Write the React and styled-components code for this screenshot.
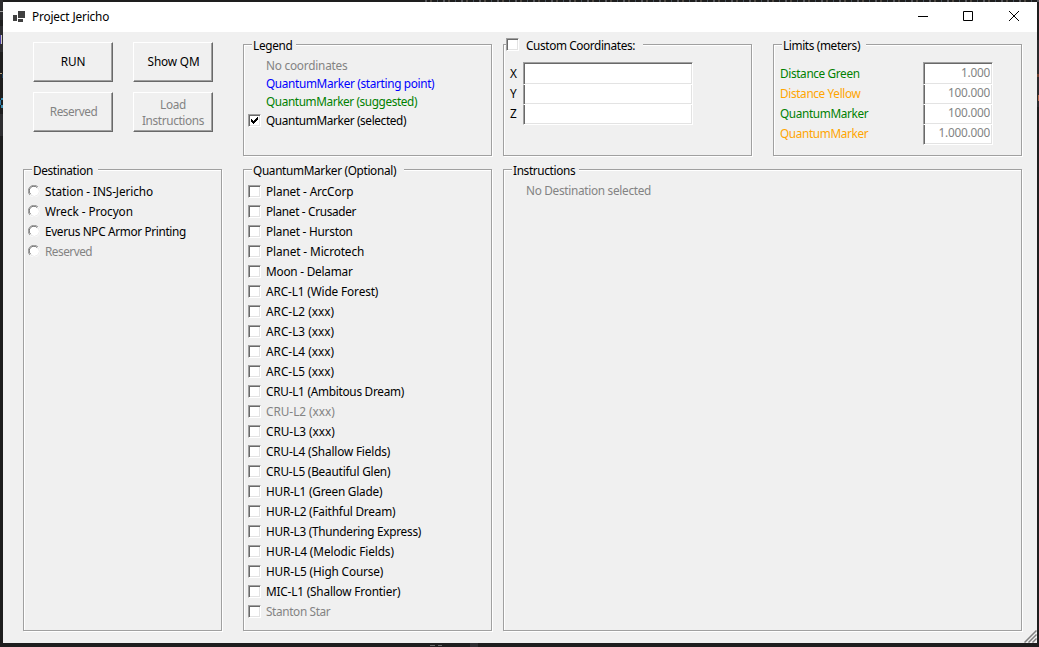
import React from 'react';
import styled, { createGlobalStyle, css } from 'styled-components';

const Global = createGlobalStyle`
  * { box-sizing: border-box; }
  html, body { margin: 0; padding: 0; }
  body {
    background: #1e1e1e;
    overflow: hidden;
    font-family: 'Noto Sans', 'Open Sans', sans-serif;
    font-size: 11.8px;
    letter-spacing: -0.22px;
    color: #000;
  }
`;

const Desktop = styled.div`
  position: relative;
  width: 1039px;
  height: 647px;
  padding: 2px 2px 4px 3px;
  background: #1e1e1e;
  overflow: hidden;
`;
const Window = styled.main`
  position: relative;
  width: 1034px;
  height: 641px;
  background: #f0f0f0;
`;
const TitleBar = styled.header`
  height: 30px;
  background: #fff;
  display: flex;
  align-items: center;
  padding-left: 10px;
`;
const Title = styled.h1`
  margin: 0 auto 0 6px;
  padding-bottom: 2px;
  font-size: 11.8px;
  font-weight: 400;
  line-height: 16px;
  letter-spacing: -0.15px;
`;
const Caption = styled.span`
  width: 46px;
  height: 28px;
  align-self: flex-start;
  display: grid;
  place-items: center;
  svg { overflow: visible; }
`;
const Client = styled.div`
  display: flex;
  flex-direction: column;
  gap: 13px;
  padding: 12px 15px 0 20px;
`;
const Row = styled.div`
  display: flex;
  height: ${p => p.$h}px;
`;
const Buttons = styled.div`
  display: grid;
  grid-template-columns: 80px 80px;
  grid-auto-rows: 40px;
  gap: 10px 20px;
  width: 199px;
  margin: -2px 21px 0 0;
  padding-left: 10px;
`;
const Button = styled.button`
  font: inherit;
  letter-spacing: ${p => p.$ls ?? -0.22}px;
  line-height: 16px;
  padding: 0 0 ${p => p.$pb ?? 1}px ${p => p.$pl ?? 0}px;
  background: #f0f0f0;
  color: ${p => (p.disabled ? '#838383' : '#000')};
  border: 1px solid;
  border-color: #fff #696969 #696969 #fff;
  box-shadow: inset -1px -1px 0 #a0a0a0;
`;
const Group = styled.section`
  width: ${p => p.$w}px;
  height: 100%;
  margin-right: ${p => p.$gap || 0}px;
  border: 1px solid #a0a0a0;
  box-shadow: 1px 1px 0 #fff, inset 1px 1px 0 #fff;
  flex: none;
`;
const Legend = styled.h2`
  width: ${p => p.$w}px;
  height: 16px;
  margin: -8px 0 0 ${p => p.$x ?? 8}px;
  padding-left: ${p => p.$pad ?? 1}px;
  background: #f0f0f0;
  font-size: 11.8px;
  font-weight: 400;
  line-height: 16px;
  letter-spacing: ${p => p.$ls ?? -0.22}px;
  white-space: nowrap;
  display: flex;
  gap: 7px;
`;
const List = styled.div`
  padding: ${p => p.$top}px 0 0 4px;
`;
const Item = styled.label`
  display: flex;
  align-items: center;
  gap: 5px;
  height: ${p => p.$h || 20}px;
  padding-bottom: 2px;
  line-height: 20px;
  letter-spacing: ${p => p.$ls ?? -0.22}px;
  white-space: nowrap;
  color: ${p => p.$c || '#000'};
`;
const sunken = css`
  border: 1px solid;
  border-color: #a0a0a0 #fff #fff #a0a0a0;
  box-shadow: inset 1px 1px 0 #696969, inset -1px -1px 0 #e3e3e3;
  background: #fff;
`;
const Box = styled.span`
  ${sunken}
  width: 13px;
  height: 13px;
  flex: none;
  margin-top: 1px;
  visibility: ${p => (p.$hidden ? 'hidden' : 'visible')};
  svg { display: block; margin: 1px; }
`;
const Field = styled.div`
  display: flex;
  height: 20px;
  color: ${p => p.$c || '#000'};
`;
const FieldLabel = styled.span`
  width: ${p => p.$w}px;
  padding-left: 2px;
  line-height: 22px;
  letter-spacing: -0.36px;
`;
const Input = styled.input`
  ${sunken}
  position: relative;
  z-index: ${p => p.$z};
  width: ${p => p.$w}px;
  height: 23px;
  padding: 0 2px 3px;
  outline: 0;
  border-radius: 0;
  font: inherit;
  letter-spacing: -0.22px;
  text-align: right;
  color: #838383;
`;
const Message = styled.p`
  margin: 2px 0 0 22px;
  line-height: 20px;
  letter-spacing: -0.3px;
  color: #838383;
`;
const Grip = styled.svg`
  position: absolute;
  right: 0;
  bottom: 0;
`;
/* Bits of the editor behind the window that show past its edges */
const Behind = styled.span`
  position: absolute;
  left: ${p => p.$x}px;
  top: ${p => p.$y}px;
  width: ${p => p.$w}px;
  height: ${p => p.$h}px;
  background: ${p => p.$c};
`;
const behind = [
  [0, 0, 3, 20, '#2d2d30'], [0, 11, 3, 1, '#a0a0a0'], [0, 26, 3, 26, '#2d2d30'],
  [0, 35, 1, 9, '#4a3fa0'], [1, 35, 1, 9, '#d0c8c0'], [0, 73, 2, 1, '#b09a78'], [2, 74, 1, 4, '#1d3f5c'],
  [1, 98, 2, 2, '#3a8ab0'], [0, 100, 1, 5, '#2f7ca8'], [1, 105, 2, 3, '#3a8ab0'], [0, 114, 3, 22, '#2d2d30'],
  [1037, 40, 2, 67, '#2a2a2c'], [1037, 74, 2, 3, '#6b3d2c'], [1038, 95, 1, 6, '#b06a4c'],
  [430, 645, 5, 1, '#6a6a6a'], [438, 645, 4, 1, '#6a6a6a'], [470, 643, 8, 4, '#2f2f33'],
];

function Check({ checked, hidden }) {
  return (
    <Box $hidden={hidden}>
      {checked && (
        <svg width="9" height="9" viewBox="0 0 9 9" shapeRendering="crispEdges">
          <path d="M1 3h1v1h1v1h1V4h1V3h1V2h1V1h1v3H7v1H6v1H5v1H4v1H3V7H2V6H1z" fill="#000" />
        </svg>
      )}
    </Box>
  );
}
function Radio() {
  return (
    <svg width="12" height="12" viewBox="0 0 12 12">
      <circle cx="6" cy="6" r="5" fill="#fff" />
      <path d="M1.9 10.1A5.6 5.6 0 0 1 10.1 1.9" fill="none" stroke="#a0a0a0" />
      <path d="M2.6 9.2A4.6 4.6 0 0 1 9.2 2.6" fill="none" stroke="#696969" />
      <path d="M10 3A4.8 4.8 0 0 1 3 10" fill="none" stroke="#e3e3e3" />
      <path d="M10.3 2A5.7 5.7 0 0 1 2 10.3" fill="none" stroke="#fff" strokeWidth=".8" />
    </svg>
  );
}

const gray = '#838383';
/* [label, tracking in px] */
const destinations = [
  ['Station - INS-Jericho', -0.1], ['Wreck - Procyon', -0.08], ['Everus NPC Armor Printing', -0.34], ['Reserved', -0.5],
];
const markers = [
  ['Planet - ArcCorp', -0.14], ['Planet - Crusader', -0.32], ['Planet - Hurston', -0.22], ['Planet - Microtech', -0.1],
  ['Moon - Delamar', -0.22], ['ARC-L1 (Wide Forest)', -0.12], ['ARC-L2 (xxx)', 0], ['ARC-L3 (xxx)', 0],
  ['ARC-L4 (xxx)', 0], ['ARC-L5 (xxx)', 0], ['CRU-L1 (Ambitous Dream)', -0.26], ['CRU-L2 (xxx)', -0.02],
  ['CRU-L3 (xxx)', -0.02], ['CRU-L4 (Shallow Fields)', -0.16], ['CRU-L5 (Beautiful Glen)', -0.2],
  ['HUR-L1 (Green Glade)', -0.22], ['HUR-L2 (Faithful Dream)', -0.2], ['HUR-L3 (Thundering Express)', -0.26],
  ['HUR-L4 (Melodic Fields)', -0.09], ['HUR-L5 (High Course)', -0.14], ['MIC-L1 (Shallow Frontier)', -0.18],
  ['Stanton Star', -0.36],
];
const limits = [
  ['Distance Green', '1.000', '#008000'],
  ['Distance Yellow', '100.000', '#ffa500'],
  ['QuantumMarker', '100.000', '#008000'],
  ['QuantumMarker', '1.000.000', '#ffa500'],
];

export default function App() {
  return (
    <Desktop>
      <Global />
      {behind.map(([x, y, w, h, c], i) => <Behind key={i} $x={x} $y={y} $w={w} $h={h} $c={c} />)}
      <Behind
        $x={420} $y={0} $w={619} $h={2}
        $c="repeating-linear-gradient(90deg, #1e1e1e 0 5px, #55555a 5px 7px, #1e1e1e 7px 10px, #4c4640 10px 12px, #1e1e1e 12px 17px, #46505a 17px 18px)"
      />
      <Window>
        <TitleBar>
          <svg width="13" height="12" viewBox="0 0 13 12" fill="#404040" shapeRendering="crispEdges">
            <path d="M0 4h4v6H0zM5 0h7v7H5zM5 8h5v3H5z" />
          </svg>
          <Title>Project Jericho</Title>
          <Caption><svg width="10" height="10"><path d="M1 5.5h10" stroke="#000" /></svg></Caption>
          <Caption><svg width="10" height="10"><path d="M.5.5h9v9h-9z" fill="none" stroke="#000" /></svg></Caption>
          <Caption><svg width="10" height="10"><path d="M0 0l10 10M10 0L0 10" stroke="#000" /></svg></Caption>
        </TitleBar>
        <Client>
          <Row $h={112}>
            <Buttons>
              <Button $pb={2}>RUN</Button>
              <Button $pb={2} $pl={1} $ls={-0.15}>Show QM</Button>
              <Button disabled $pb={2} $pl={1} $ls={-0.45}>Reserved</Button>
              <Button disabled $ls={-0.35}>Load<br />Instructions</Button>
            </Buttons>
            <Group $w={249} $gap={11}>
              <Legend $w={44} $ls={-0.3}>Legend</Legend>
              <List $top={4}>
                <Item $h={18} $c={gray}><Check hidden />No coordinates</Item>
                <Item $h={18} $c="#0000ff" $ls={-0.34}><Check hidden />QuantumMarker (starting point)</Item>
                <Item $h={18} $c="#008000" $ls={-0.4}><Check hidden />QuantumMarker (suggested)</Item>
                <Item $ls={-0.37}><Check checked />QuantumMarker (selected)</Item>
              </List>
            </Group>
            <Group $w={249} $gap={21}>
              <Legend $w={137} $x={2} $pad={0} $ls={-0.38}><Check /><span>Custom Coordinates:</span></Legend>
              <List $top={9}>
                {['X', 'Y', 'Z'].map((n, i) => (
                  <Field key={n}>
                    <FieldLabel $w={15}>{n}</FieldLabel>
                    <Input $w={170} $z={5 - i} />
                  </Field>
                ))}
              </List>
            </Group>
            <Group $w={249}>
              <Legend $w={84} $ls={-0.36}>Limits (meters)</Legend>
              <List $top={9}>
                {limits.map(([name, value, color], i) => (
                  <Field key={i} $c={color}>
                    <FieldLabel $w={145}>{name}</FieldLabel>
                    <Input $w={70} $z={5 - i} defaultValue={value} />
                  </Field>
                ))}
              </List>
            </Group>
          </Row>
          <Row $h={462}>
            <Group $w={199} $gap={21}>
              <Legend $w={66} $ls={-0.36}>Destination</Legend>
              <List $top={4}>
                {destinations.map(([name, ls], i) => (
                  <Item key={name} $ls={ls} $c={i === 3 ? gray : '#000'}><Radio />{name}</Item>
                ))}
              </List>
            </Group>
            <Group $w={249} $gap={11}>
              <Legend $w={152} $ls={-0.33}>QuantumMarker (Optional)</Legend>
              <List $top={4}>
                {markers.map(([name, ls], i) => (
                  <Item key={name} $ls={ls} $c={i === 11 || i === 21 ? gray : '#000'}><Check />{name}</Item>
                ))}
              </List>
            </Group>
            <Group $w={519}>
              <Legend $w={67} $ls={-0.35}>Instructions</Legend>
              <Message>No Destination selected</Message>
            </Group>
          </Row>
        </Client>
        <Grip width="13" height="13" viewBox="0 0 13 13">
          <path d="M.5 12.5l12-12M4.5 12.5l8-8M8.5 12.5l4-4" stroke="#808080" strokeWidth="1.5" />
        </Grip>
      </Window>
    </Desktop>
  );
}
